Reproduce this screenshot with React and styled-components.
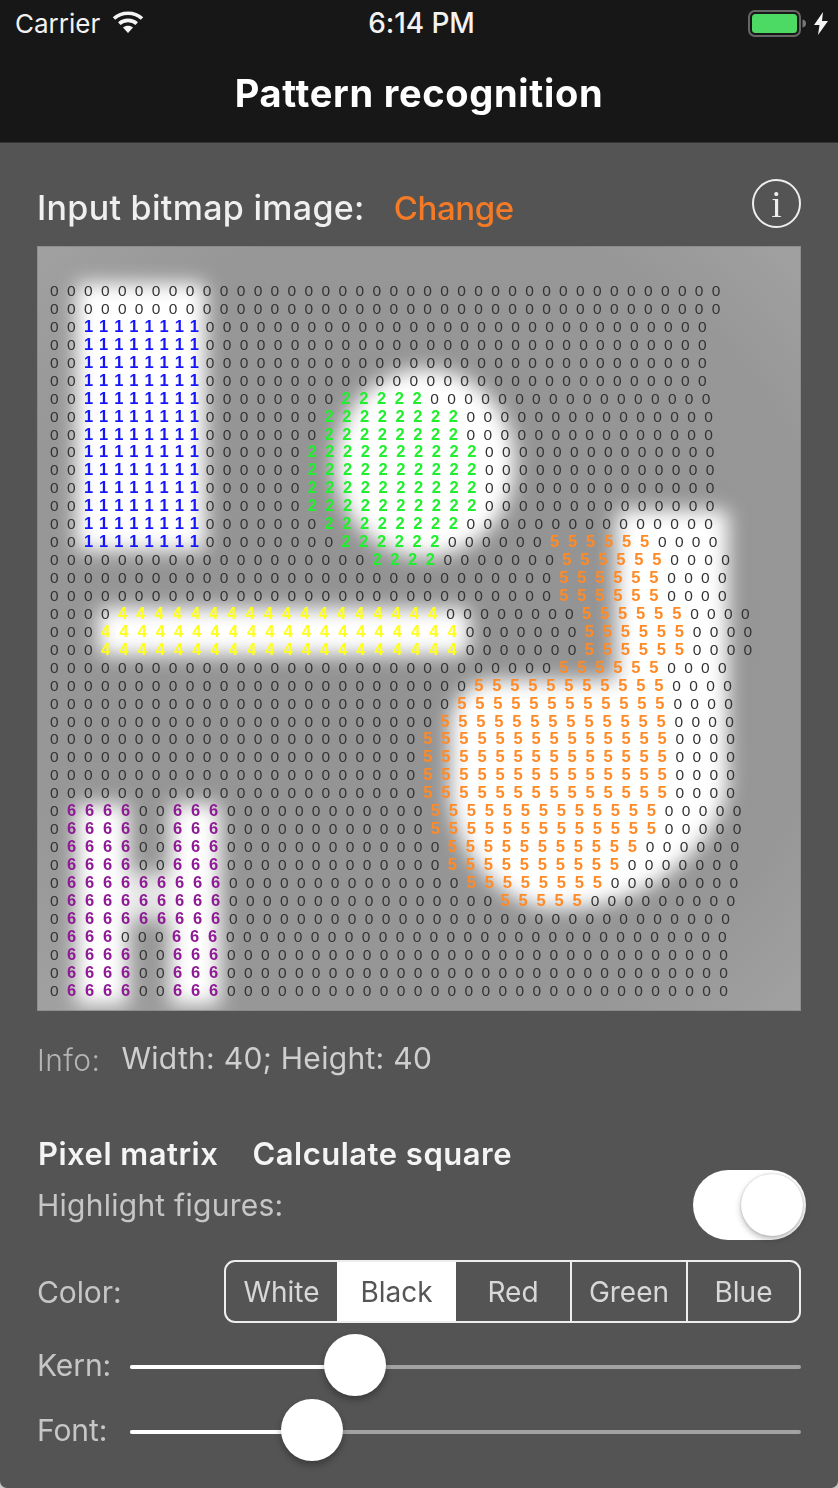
import React from "react";
import styled, { createGlobalStyle } from "styled-components";

const Global = createGlobalStyle`
  html, body { margin: 0; padding: 0; background: #c8c8c8; }
  #root { width: 838px; height: 1488px; overflow: hidden; }
`;

const Screen = styled.div`
  width: 838px;
  height: 1488px;
  display: flex;
  flex-direction: column;
  font-family: Inter, "Liberation Sans", sans-serif;
  filter: blur(0.45px);
`;

const TopBar = styled.header`
  height: 143px;
  flex: none;
  background: #171717;
  border-bottom: 1px solid #333;
  box-sizing: border-box;
  color: #fff;
`;

const Status = styled.div`
  height: 46px;
  display: grid;
  grid-template-columns: 1fr auto 1fr;
  align-items: center;
  padding: 0 10px 0 15px;
  font-size: 26px;
  color: #f2f2f2;
`;

const StatusLeft = styled.div`
  display: flex;
  align-items: center;
  gap: 12px;
`;

const StatusRight = styled.div`
  display: flex;
  justify-content: flex-end;
  align-items: center;
  gap: 4px;
`;

const Clock = styled.span`
  font-weight: 500;
  font-size: 28px;
  letter-spacing: -0.1px;
`;

const Title = styled.h1`
  margin: 0;
  height: 94px;
  display: flex;
  align-items: center;
  justify-content: center;
  font-size: 38px;
  font-weight: 700;
  letter-spacing: 0.7px;
`;

const Main = styled.main`
  flex: 1;
  background: #545454;
  border-radius: 0 0 7px 7px;
  padding: 36px 37px 0;
  display: flex;
  flex-direction: column;
`;

const Head = styled.div`
  height: 49px;
  margin-bottom: 18px;
  display: flex;
  align-items: flex-end;
  gap: 29px;
  font-size: 34px;
  line-height: 40px;
  font-weight: 500;
  letter-spacing: 0.3px;
  color: #efefef;
`;

const Change = styled.span`
  color: #f47a26;
  font-size: 33px;
  letter-spacing: -0.4px;
`;

const InfoIcon = styled.div`
  margin-left: auto;
  align-self: center;
  width: 49px;
  height: 49px;
  box-sizing: border-box;
  border: 2px solid #eee;
  border-radius: 50%;
  display: flex;
  align-items: center;
  justify-content: center;
  font-family: "Liberation Serif", serif;
  font-size: 38px;
  line-height: 1;
  font-weight: 400;
  color: #eee;
  letter-spacing: 0;
`;

const Bitmap = styled.div`
  position: relative;
  width: 764px;
  height: 765px;
  flex: none;
  background: #999;
  overflow: hidden;
`;

const BitmapArt = styled.svg`
  display: block;
  width: 764px;
  height: 765px;
`;

const Matrix = styled.div`
  position: absolute;
  left: 13px;
  top: 36px;
  display: flex;
  flex-direction: column;
  font-family: "Liberation Sans", sans-serif;
  font-size: 15.5px;
  color: #333;
  filter: blur(0.3px);
`;

const MatrixRow = styled.div`
  height: 17.95px;
  line-height: 17.95px;
  white-space: nowrap;
`;

const runStyle = {
  0: { c: "#333", w: 400, f: 15.5, s: 8.35 },
  1: { c: "#1414ff", w: 700, f: 16.5, s: 6.85 },
  2: { c: "#1fef2c", w: 700, f: 16.5, s: 8.57 },
  4: { c: "#ffff1e", w: 700, f: 16.5, s: 9.07 },
  5: { c: "#ff8a26", w: 700, f: 16.5, s: 8.83 },
  6: { c: "#8f1a96", w: 700, f: 16.5, s: 8.83 },
};

const Run = styled.span`
  color: ${(p) => runStyle[p.$d].c};
  font-weight: ${(p) => runStyle[p.$d].w};
  font-size: ${(p) => runStyle[p.$d].f}px;
  letter-spacing: ${(p) => runStyle[p.$d].s}px;
`;

const InfoRow = styled.div`
  height: 46px;
  margin-top: 24px;
  display: flex;
  align-items: center;
  gap: 21px;
  font-size: 30px;
`;

const InfoLabel = styled.span`
  color: #b4b4b4;
  font-weight: 300;
  padding-top: 4px;
  letter-spacing: 0.4px;
`;

const InfoValue = styled.span`
  color: #cfcfcf;
  font-weight: 400;
  letter-spacing: 0.3px;
`;

const Tabs = styled.div`
  height: 40px;
  margin-top: 52px;
  padding-left: 1px;
  display: flex;
  align-items: center;
  gap: 34px;
  font-size: 31px;
  font-weight: 600;
  letter-spacing: 0.5px;
  color: #f4f4f4;
`;

const SwitchRow = styled.div`
  height: 70px;
  margin-top: -3px;
  margin-right: -5px;
  display: flex;
  align-items: center;
  justify-content: space-between;
`;

const Label = styled.span`
  font-size: 30px;
  font-weight: 400;
  color: #c6c6c6;
  letter-spacing: ${(p) => p.$spacing ?? -0.1}px;
`;

const Toggle = styled.div`
  width: 113px;
  height: 70px;
  box-sizing: border-box;
  background: #fff;
  border-radius: 35px;
  padding: 4px 3px;
  display: flex;
  justify-content: flex-end;
`;

const ToggleKnob = styled.div`
  width: 62px;
  height: 62px;
  border-radius: 50%;
  background: #fff;
  box-shadow: 0 3px 6px rgba(0, 0, 0, 0.28), 0 0 2px rgba(0, 0, 0, 0.2);
`;

const ColorRow = styled.div`
  height: 63px;
  margin-top: 20px;
  display: flex;
  align-items: center;
  justify-content: space-between;
`;

const Segments = styled.div`
  width: 577px;
  height: 63px;
  box-sizing: border-box;
  border: 2px solid #eee;
  border-radius: 11px;
  overflow: hidden;
  display: grid;
  grid-template-columns: 111px 119px 114px 116px 1fr;
`;

const Segment = styled.div`
  display: flex;
  align-items: center;
  justify-content: center;
  font-size: 28px;
  color: ${(p) => (p.$active ? "#555" : "#d8d8d8")};
  background: ${(p) => (p.$active ? "#fff" : "transparent")};
  border-left: ${(p) => (p.$divider ? "2px solid #eee" : "none")};
`;

const SliderRow = styled.div`
  height: 63px;
  margin-top: ${(p) => p.$gap}px;
  display: flex;
  align-items: center;
`;

const SliderLabel = styled(Label)`
  width: 93px;
  flex: none;
`;

const Track = styled.div`
  position: relative;
  flex: 1;
  height: 4px;
  margin-top: 4px;
  border-radius: 2px;
  background: #a2a2a2;
`;

const TrackFill = styled.div`
  height: 100%;
  border-radius: 2px;
  background: #fff;
`;

const Thumb = styled.div`
  position: absolute;
  top: 50%;
  width: 62px;
  height: 62px;
  margin: -33px 0 0 -31px;
  border-radius: 50%;
  background: #fff;
  box-shadow: 0 4px 7px rgba(0, 0, 0, 0.3);
`;

function row(...parts) {
  let s = "";
  for (let i = 0; i < parts.length; i += 2) s += String(parts[i]).repeat(parts[i + 1]);
  return s;
}

const ONE = [0, 2, 1, 8];
const H1 = [0, 1, 6, 4, 0, 2, 6, 3];
const H2 = [0, 1, 6, 9];
const H3 = [0, 1, 6, 3, 0, 3, 6, 3];

const matrix = [
  row(0, 40),
  row(0, 40),
  row(...ONE, 0, 30),
  row(...ONE, 0, 30),
  row(...ONE, 0, 30),
  row(...ONE, 0, 30),
  row(...ONE, 0, 8, 2, 5, 0, 17),
  row(...ONE, 0, 7, 2, 8, 0, 15),
  row(...ONE, 0, 7, 2, 8, 0, 15),
  row(...ONE, 0, 6, 2, 10, 0, 14),
  row(...ONE, 0, 6, 2, 10, 0, 14),
  row(...ONE, 0, 6, 2, 10, 0, 14),
  row(...ONE, 0, 6, 2, 10, 0, 14),
  row(...ONE, 0, 7, 2, 8, 0, 15),
  row(...ONE, 0, 8, 2, 6, 0, 6, 5, 6, 0, 4),
  row(0, 19, 2, 4, 0, 7, 5, 6, 0, 4),
  row(0, 30, 5, 6, 0, 4),
  row(0, 30, 5, 6, 0, 4),
  row(0, 4, 4, 18, 0, 8, 5, 6, 0, 4),
  row(0, 3, 4, 20, 0, 7, 5, 6, 0, 4),
  row(0, 3, 4, 20, 0, 7, 5, 6, 0, 4),
  row(0, 30, 5, 6, 0, 4),
  row(0, 25, 5, 11, 0, 4),
  row(0, 24, 5, 12, 0, 4),
  row(0, 23, 5, 13, 0, 4),
  row(0, 22, 5, 14, 0, 4),
  row(0, 22, 5, 14, 0, 4),
  row(0, 22, 5, 14, 0, 4),
  row(0, 22, 5, 14, 0, 4),
  row(...H1, 0, 12, 5, 13, 0, 5),
  row(...H1, 0, 12, 5, 13, 0, 5),
  row(...H1, 0, 13, 5, 11, 0, 6),
  row(...H1, 0, 13, 5, 10, 0, 7),
  row(...H2, 0, 14, 5, 8, 0, 8),
  row(...H2, 0, 16, 5, 5, 0, 9),
  row(...H2, 0, 30),
  row(...H3, 0, 30),
  row(...H1, 0, 30),
  row(...H1, 0, 30),
  row(...H1, 0, 30),
];

const WifiIcon = () => (
  <svg width="32" height="24" viewBox="0 0 32 24" fill="none" style={{ marginTop: -2 }}>
    <path d="M2 8.5C9.5 1.5 22.5 1.5 30 8.5" stroke="#f4f4f4" strokeWidth="3.6" />
    <path d="M7.3 13.6C12 9.3 20 9.3 24.7 13.6" stroke="#f4f4f4" strokeWidth="3.6" />
    <path d="M11 17.5C13.8 15.2 18.2 15.2 21 17.5L16 23Z" fill="#f4f4f4" />
  </svg>
);

const BatteryIcon = () => (
  <svg width="62" height="27" viewBox="0 0 62 27">
    <rect x="1" y="1" width="51" height="25" rx="6" fill="none" stroke="#666" strokeWidth="2" />
    <rect x="4" y="4" width="45" height="19" rx="3.5" fill="#4cd964" />
    <path d="M54.5 9.5c2.5.5 3.5 2 3.5 4s-1 3.5-3.5 4z" fill="#777" />
  </svg>
);

const BoltIcon = () => (
  <svg width="14" height="23" viewBox="0 0 14 23">
    <path d="M9 0L0 13h5.5L4 23l10-14H8z" fill="#f4f4f4" />
  </svg>
);

const BitmapShapes = () => (
  <BitmapArt viewBox="0 0 764 765">
    <defs>
      <filter id="soft" x="-20%" y="-20%" width="140%" height="140%">
        <feGaussianBlur stdDeviation="9.5" />
      </filter>
      <radialGradient id="ground" cx="0.5" cy="0.5" r="0.72">
        <stop offset="0" stopColor="#929292" />
        <stop offset="0.75" stopColor="#979797" />
        <stop offset="1" stopColor="#a2a2a2" />
      </radialGradient>
    </defs>
    <rect width="764" height="765" fill="url(#ground)" />
    <g fill="#fff" filter="url(#soft)" transform="translate(-37 -246)">
      <rect x="76" y="283" width="130" height="268" rx="8" />
      <ellipse cx="425" cy="463" rx="90" ry="94" />
      <rect x="98" y="608" width="372" height="47" rx="8" />
      <rect x="616" y="510" width="112" height="184" rx="6" />
      <path d="M490 680H728V785C724 818 702 848 672 870C640 898 580 916 532 906C488 888 458 852 450 800V720C456 693 470 684 490 680Z" />
      <rect x="76" y="804" width="52" height="201" />
      <rect x="170" y="804" width="50" height="201" />
      <rect x="126" y="872" width="46" height="48" fill="#e4e4e4" />
    </g>
    <rect x="0.5" y="0.5" width="763" height="764" fill="none" stroke="#828282" strokeOpacity="0.6" />
  </BitmapArt>
);

export default function App() {
  return (
    <Screen>
      <Global />
      <TopBar>
        <Status>
          <StatusLeft>
            <span>Carrier</span>
            <WifiIcon />
          </StatusLeft>
          <Clock>6:14 PM</Clock>
          <StatusRight>
            <BatteryIcon />
            <BoltIcon />
          </StatusRight>
        </Status>
        <Title>Pattern recognition</Title>
      </TopBar>
      <Main>
        <Head>
          <span>Input bitmap image:</span>
          <Change>Change</Change>
          <InfoIcon>i</InfoIcon>
        </Head>
        <Bitmap>
          <BitmapShapes />
          <Matrix>
            {matrix.map((line, i) => (
              <MatrixRow key={i}>
                {line.match(/(.)\1*/g).map((run, j) => (
                  <Run key={j} $d={run[0]}>
                    {run}
                  </Run>
                ))}
              </MatrixRow>
            ))}
          </Matrix>
        </Bitmap>
        <InfoRow>
          <InfoLabel>Info:</InfoLabel>
          <InfoValue>Width: 40; Height: 40</InfoValue>
        </InfoRow>
        <Tabs>
          <span>Pixel matrix</span>
          <span>Calculate square</span>
        </Tabs>
        <SwitchRow>
          <Label $spacing={0.25}>Highlight figures:</Label>
          <Toggle>
            <ToggleKnob />
          </Toggle>
        </SwitchRow>
        <ColorRow>
          <Label>Color:</Label>
          <Segments>
            <Segment>White</Segment>
            <Segment $active>Black</Segment>
            <Segment>Red</Segment>
            <Segment $divider>Green</Segment>
            <Segment $divider>Blue</Segment>
          </Segments>
        </ColorRow>
        <SliderRow $gap={10}>
          <SliderLabel>Kern:</SliderLabel>
          <Track>
            <TrackFill style={{ width: "33.5%" }} />
            <Thumb style={{ left: "33.5%" }} />
          </Track>
        </SliderRow>
        <SliderRow $gap={2}>
          <SliderLabel>Font:</SliderLabel>
          <Track>
            <TrackFill style={{ width: "27.1%" }} />
            <Thumb style={{ left: "27.1%" }} />
          </Track>
        </SliderRow>
      </Main>
    </Screen>
  );
}
